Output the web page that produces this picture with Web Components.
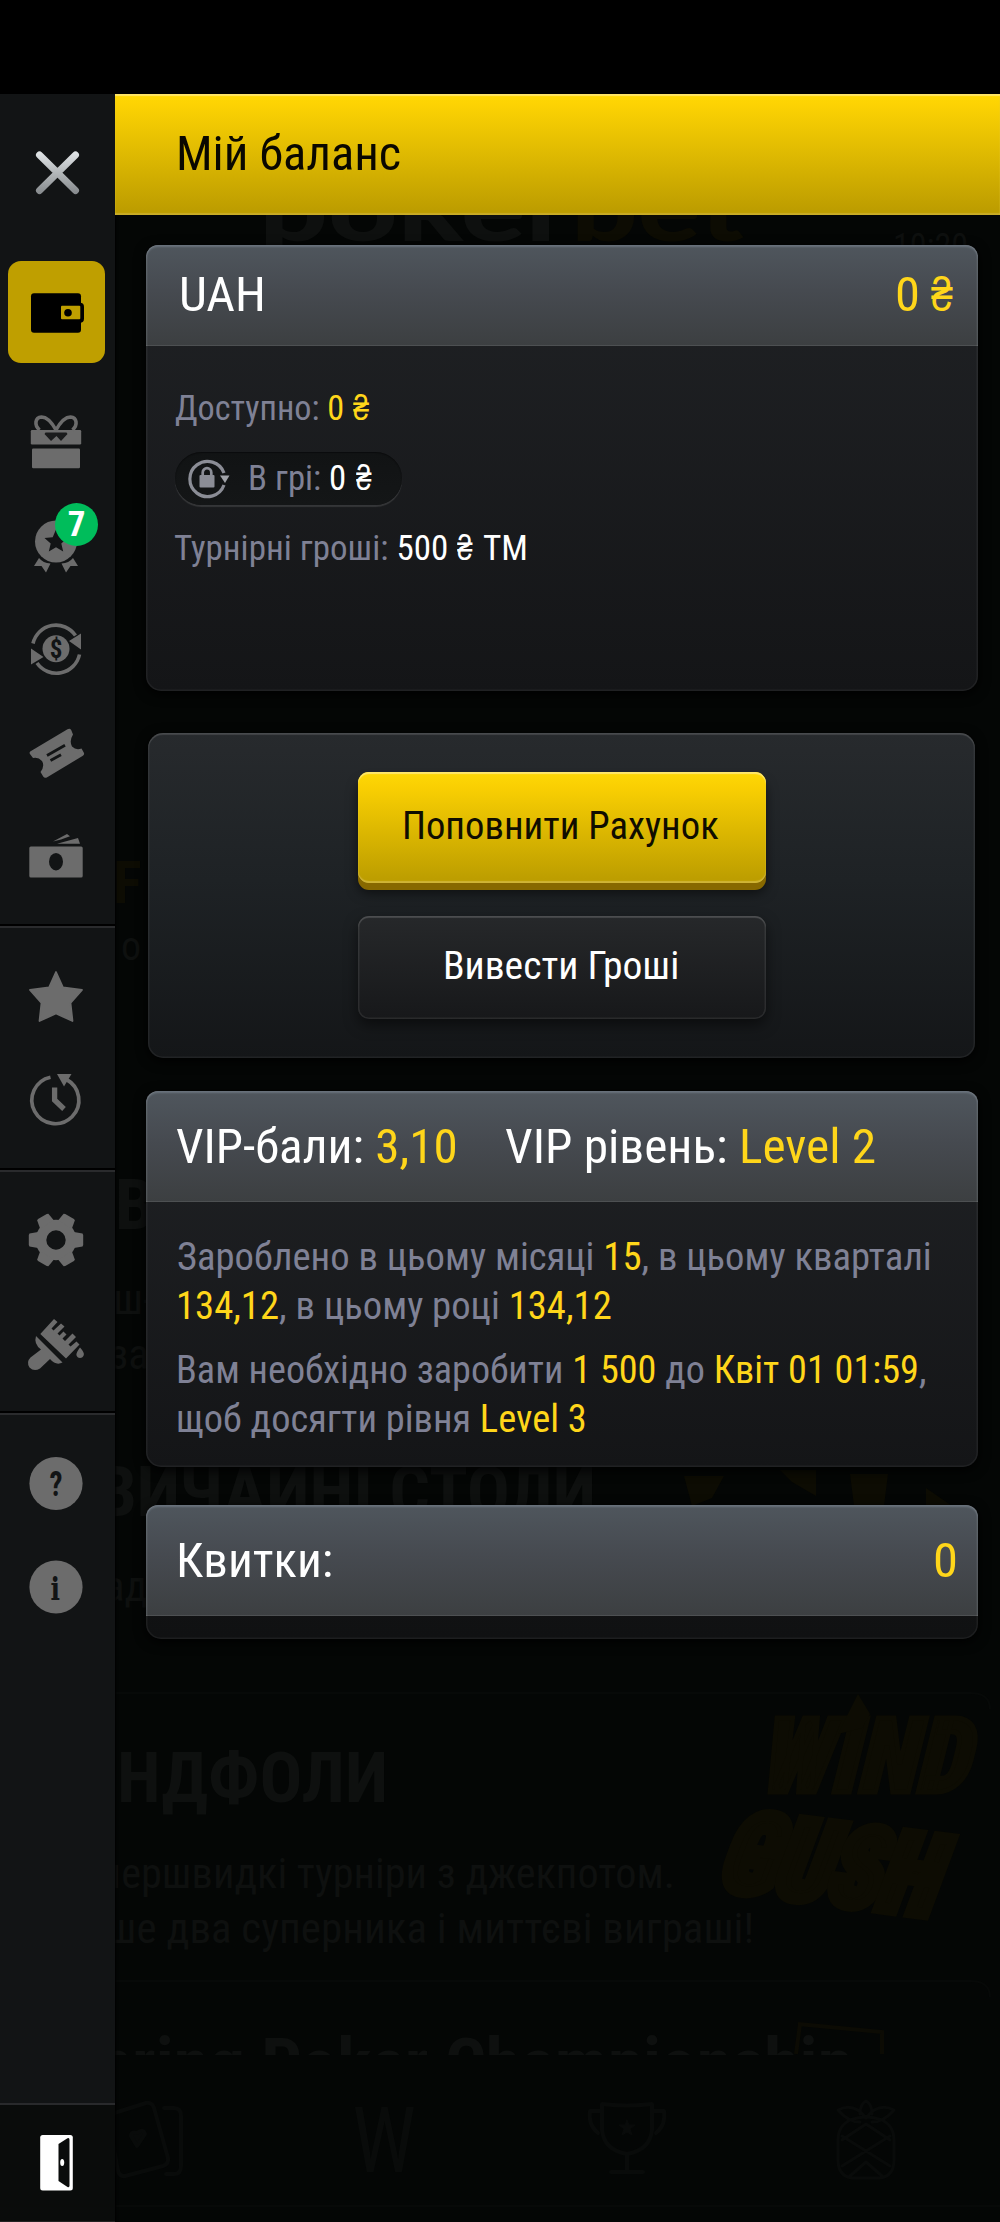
<!DOCTYPE html>
<html lang="uk">
<head>
<meta charset="utf-8">
<title>Мій баланс</title>
<style>
html,body{margin:0;background:#040605}
body{font-family:"Roboto Condensed",Roboto,sans-serif;font-stretch:75%;color:#fff}
b{font-weight:400;color:#ffd61a}
i{font-style:normal;color:#fff}
.line{display:flex}
</style>
</head>
<body>
<balance-page>
  <side-rail slot="rail"></side-rail>
  <title-bar slot="main"><fit-text w="221">Мій баланс</fit-text></title-bar>
  <info-card slot="main" style="--h:446px;--head:101px;--lift:2px">
    <fit-text slot="head" w="81" style="margin-left:36.5px">UAH</fit-text>
    <div slot="head" class="line" style="gap:14.5px;margin-right:24.5px"><fit-text w="20"><b>0</b></fit-text><fit-text w="22"><b>₴</b></fit-text></div>
    <div style="display:flex;flex-direction:column;gap:17px;padding:36px 0 0 29px;font-size:35px;line-height:53px">
      <div class="line" style="gap:10.5px"><fit-text w="168">Доступно: <b>0</b></fit-text><fit-text w="16.5"><b>₴</b></fit-text></div>
      <lock-pill><fit-text w="95">В грі: <i>0</i></fit-text><fit-text w="16" style="margin-left:11px"><i>₴</i></fit-text></lock-pill>
      <div class="line" style="gap:10.5px"><fit-text w="272">Турнірні гроші: <i>500</i></fit-text><fit-text w="16"><i>₴</i></fit-text><fit-text w="41.5"><i>ТМ</i></fit-text></div>
    </div>
  </info-card>
  <action-card slot="main">
    <push-button kind="gold"><fit-text w="313.5">Поповнити Рахунок</fit-text></push-button>
    <push-button kind="dark"><fit-text w="232.5">Вивести Гроші</fit-text></push-button>
  </action-card>
  <info-card slot="main" style="--h:376px;--head:111px;margin-top:33px">
    <div slot="head" class="line" style="gap:51px;margin-left:31.5px">
      <fit-text w="278">VIP-бали: <b>3,10</b></fit-text>
      <fit-text w="368.5">VIP рівень: <b>Level 2</b></fit-text>
    </div>
    <div style="display:flex;flex-direction:column;padding:31px 0 0 32px;font-size:38px;line-height:49px">
      <fit-text w="752">Зароблено в цьому місяці <b>15</b>, в цьому кварталі</fit-text>
      <fit-text w="433"><b>134,12</b>, в цьому році <b>134,12</b></fit-text>
      <fit-text w="747" style="margin-top:15px">Вам необхідно заробити <b>1 500</b> до <b>Квіт 01 01:59</b>,</fit-text>
      <fit-text w="407">щоб досягти рівня <b>Level 3</b></fit-text>
    </div>
  </info-card>
  <info-card slot="main" style="--h:134px;--head:111px;--body1:#121415;--body2:#101112;margin-top:38px">
    <fit-text slot="head" w="152" style="margin-left:33.5px">Квитки:</fit-text>
    <fit-text slot="head" w="20" style="margin-right:23px"><b>0</b></fit-text>
  </info-card>
</balance-page>

<script>
const define=(name,html,ready)=>{
  const t=document.createElement('template');t.innerHTML=html;
  customElements.define(name,class extends HTMLElement{
    constructor(){super();this.attachShadow({mode:'open'}).append(t.content.cloneNode(true));}
    connectedCallback(){if(ready)ready(this,this.shadowRoot);}
  });
};

define('lobby-backdrop',`<style>
:host{display:block;position:absolute;inset:0;z-index:-1;overflow:hidden;pointer-events:none}
svg{display:block}
text{font-family:"Roboto Condensed",Roboto,sans-serif;fill:#0e100f}
.t{font-weight:700;font-size:70px}.p{font-size:43px}
.y{fill:#0d0c03}
.ln{stroke:#070908;fill:none;stroke-width:2}
.ic{stroke:#090b0a;fill:none;stroke-width:4;stroke-linejoin:round;stroke-linecap:round}
</style>
<svg width="1000" height="2222" viewBox="0 0 1000 2222">
<rect width="1000" height="94" fill="#000"/>
<text x="259" y="241" style="font:900 92px Lato,sans-serif" textLength="312" lengthAdjust="spacingAndGlyphs">poker</text>
<text x="571" y="241" class="y" style="font:900 92px Lato,sans-serif" textLength="173" lengthAdjust="spacingAndGlyphs">bet</text>
<text x="893" y="258" style="font-size:35px" textLength="75" lengthAdjust="spacingAndGlyphs">10:20</text>
<text x="113" y="903" class="y" style="font-weight:700;font-size:60px">F</text>
<text x="121" y="960" style="font-size:40px">о</text>
<text x="115" y="1229" class="t">В</text>
<text x="113" y="1314" class="p">ш-</text>
<text x="109" y="1369" class="p">за</text>
<text x="104" y="1601" class="p">ад</text>
<text x="58" y="1516" class="t" textLength="538" lengthAdjust="spacingAndGlyphs">ЗВИЧАЙНІ СТОЛИ</text>
<path class="y" d="M684 1476h40l-12 22-20 8zM780 1470h36v26l-24-14zM850 1474h38l-4 32h-30zM926 1488l26 18h-26z"/>
<path class="ln" d="M0 1693H970q20 0 20 16M0 1981H970q20 0 20 16M0 2206H1000"/>
<text x="58" y="1802" class="t" textLength="330" lengthAdjust="spacingAndGlyphs">ВІНДФОЛИ</text>
<text x="58" y="1888" class="p" textLength="617" lengthAdjust="spacingAndGlyphs">Супершвидкі турніри з джекпотом.</text>
<text x="58" y="1943" class="p" textLength="696" lengthAdjust="spacingAndGlyphs">Лише два суперника і миттєві виграші!</text>
<g transform="translate(17 3) skewX(-14)">
<text x="1186" y="1789" class="y" style="font-weight:900;font-size:104px;stroke:#0d0c03;stroke-width:5" textLength="210" lengthAdjust="spacingAndGlyphs">WIND</text>
<text x="1168" y="1770" transform="rotate(7 1180 1890) translate(0 116)" class="y" style="font-weight:900;font-size:106px;stroke:#0d0c03;stroke-width:12" textLength="222" lengthAdjust="spacingAndGlyphs">GUSH</text>
</g>
<path class="y" d="M858 1694l12 20-8 14-24 6z"/>
<clipPath id="c"><rect y="2000" width="1000" height="55"/></clipPath>
<g clip-path="url(#c)"><text x="58" y="2088" class="t" textLength="795" lengthAdjust="spacingAndGlyphs">Spring Poker Championship</text>
<path d="M798 2024l84 8v22M800 2024l-4 30" fill="none" stroke="#0c0b04" stroke-width="4"/></g>
<g class="ic"><path d="M108 2115l38-12q6-1 8 5l14 50q1 6-5 8l-38 10q-5 1-7-5zM164 2108h10q7 0 7 8v50q0 8-7 8h-8"/>
<path d="M137 2146l-6-10q0-5 6-3 6-5 8 1z" fill="#090b0a"/>
<path d="M602 2104q25 3 50 0v26q-2 20-25 24-23-4-25-24zM600 2111h-10q-2 14 8 22M654 2111h10q2 14-8 22M627 2155v15M611 2172h32"/>
<path d="M627 2120l2 5h6l-5 4 2 6-5-3-5 3 2-6-5-4h6z" fill="#090b0a" stroke-width="1"/>
<path d="M850 2120q16-6 32 0 12 6 12 20v20q0 16-14 18h-28q-14-2-14-18v-20q0-14 12-20zM866 2118q-12-16-28-8 10 12 22 12M866 2118q12-16 28-8-10 12-22 12M860 2114q0-10 6-13 6 3 6 13M842 2140l24-16 24 16M842 2166l48-30M842 2136l48 30M850 2176l16-14 16 14" stroke-width="3"/></g>
<text x="352" y="2172" style="font-size:90px;fill:#090b0a" textLength="64" lengthAdjust="spacingAndGlyphs">W</text>
</svg>`);

define('balance-page',`<style>
:host{display:flex;position:relative;width:1000px;height:2222px;box-sizing:border-box;padding-top:94px;z-index:0;overflow:hidden}
main{flex:1;display:flex;flex-direction:column}
</style><lobby-backdrop></lobby-backdrop><slot name="rail"></slot><main><slot name="main"></slot></main>`);

define('title-bar',`<style>
:host{display:flex;align-items:center;flex:none;height:121px;margin-bottom:30px;padding:0 0 1px 64px;box-sizing:border-box;
font-size:48px;line-height:60px;color:#0a0800;background:linear-gradient(#ffd704,#fdd303 8%,#bd9d00 96%);
box-shadow:inset 0 2px 1px #ffe566,inset 0 -2px 1px #c9ac26}
</style><slot></slot>`);

define('info-card',`<style>
:host{display:flex;flex-direction:column;flex:none;height:var(--h);width:832px;margin-left:30.5px;border-radius:12px 12px 15px 15px;color:#7f8195;
background:linear-gradient(var(--body1,#202225),var(--body2,#141517));box-shadow:inset 0 0 0 1.5px rgba(255,255,255,.055),0 3px 12px #000}
header{display:flex;align-items:center;justify-content:space-between;flex:none;box-sizing:border-box;height:var(--head);padding-bottom:var(--lift,0);
font-size:48px;line-height:60px;color:#fff;border-radius:12px 12px 0 0;
background:linear-gradient(#4f565d,#464a50 45%,#3c3f41);box-shadow:inset 0 2px 2px rgba(190,205,220,.24),inset 0 -1px 0 rgba(255,255,255,.09),inset 1.5px 0 0 rgba(255,255,255,.07),inset -1.5px 0 0 rgba(255,255,255,.07)}
</style><header><slot name="head"></slot></header><slot></slot>`);

define('lock-pill',`<style>
:host{display:flex;align-items:center;width:227px;height:53px;border-radius:27px;color:#7f8195;
background:linear-gradient(#111314,#141617);box-shadow:0 2px 1px rgba(255,255,255,.12),inset 0 1px 1px #0b0c0d}
svg{flex:none;display:block}
</style><svg width="75" height="53" viewBox="175 452 75 53">
<path d="M224 473A17.6 17.6 0 1 0 224 485" fill="none" stroke="#8b8d96" stroke-width="3.2"/>
<path d="M220 475.500h9.500l-4.500 7.500z" fill="#a0a2a8"/><rect x="199.500" y="475" width="15" height="12.500" rx="1" fill="#8b8d96"/>
<path d="M202.700 476v-3.500a4.300 4.300 0 0 1 8.600 0v3.500" fill="none" stroke="#8b8d96" stroke-width="2.700"/></svg><slot></slot>`);

define('action-card',`<style>
:host{display:flex;flex-direction:column;align-items:center;gap:26px;flex:none;box-sizing:border-box;width:827px;height:325px;margin:42px 0 0 33px;padding-top:39px;
border-radius:15px;background:linear-gradient(#272a2d,#1e2225 45%,#141618);box-shadow:inset 0 2px 1px rgba(255,255,255,.1),inset 0 0 0 1.5px rgba(255,255,255,.06),0 3px 12px #000}
</style><slot></slot>`);

define('push-button',`<style>
:host{display:flex;align-items:center;justify-content:center;box-sizing:border-box;width:408px;border-radius:11px;font-size:38px;line-height:50px}
:host([kind=gold]){height:111px;margin-bottom:7px;padding-bottom:4px;color:#100d00;background:linear-gradient(#ffd806,#f9cf02 14%,#bd9e00 96%);
box-shadow:inset 0 2px 1px #ffe76c,inset 0 -2px 1px #d0b436,0 7px 0 #876800,0 10px 12px rgba(0,0,0,.55)}
:host([kind=dark]){height:103px;padding-bottom:4px;color:#fff;background:linear-gradient(#26282a,#17181a);
box-shadow:inset 0 2px 1px rgba(255,255,255,.11),inset 0 0 0 1.500px rgba(255,255,255,.08),0 6px 14px rgba(0,0,0,.5)}
</style><slot></slot>`);

/* Every glyph is drawn in rail coordinates; "top" is where its slot begins. */
const glyphs={
close:`<defs><linearGradient id="g" gradientUnits="userSpaceOnUse" x1="0" y1="151" x2="0" y2="194"><stop stop-color="#e3e7e9"/><stop offset="1" stop-color="#85898c"/></linearGradient></defs><path d="M39.500 155L75.500 190.500M75.500 155L39.500 190.500" stroke="url(#g)" stroke-width="7" stroke-linecap="round"/>`,
wallet:`<rect x="31" y="293.300" width="50" height="39.400" rx="3" fill="#000"/><rect x="58" y="302.700" width="26" height="20" rx="4" fill="#000"/><rect x="61" y="305.700" width="19.300" height="13.600" rx="1" fill="#bf9f00"/><circle cx="68" cy="312.700" r="3.800" fill="#000"/>`,
gift:`<rect x="32" y="448.500" width="48" height="19.700" rx="1.200"/><rect x="30.800" y="430" width="50.400" height="14.500" rx="1.200"/><path d="M56 430C51 421 46 417 41.500 417 35 417.500 34 425 39.500 430M56 430C61 421 66 417 70.500 417 77 417.500 78 425 72.500 430" fill="none" stroke="#6c6c6c" stroke-width="3.600"/><path d="M45.500 432.500H66.500L67.500 434 61 441 56.500 436 51 441 44.500 434z" fill="#1a1b1c"/>`,
medal:`<circle cx="56" cy="541.500" r="21"/><path d="M56 529.500l3.300 7.700 8.200.7-6.200 5.500 1.900 8.100-7.200-4.300-7.200 4.300 1.900-8.100-6.200-5.500 8.200-.7z" fill="#121415"/><path d="M39 558q4 5 11.500 5.500L46 572.500 41.500 566H34zM73 558q-4 5-11.500 5.500L66 572.500 70.500 566H78z"/>`,
swap:`<circle cx="56" cy="648.800" r="13.500"/><text x="56" y="657.500" text-anchor="middle" font-size="25" font-weight="700" fill="#121415">$</text><path d="M33 643.500A23.600 23.600 0 0 1 75.500 635.500M79.500 654.500A23.600 23.600 0 0 1 37 663" fill="none" stroke="#6c6c6c" stroke-width="3.600"/><path d="M81 633.500V649.500L69 641zM31 648.500V664.500L43.500 657z"/>`,
ticket:`<path d="M31 751L67.500 729.300Q70 728 71.300 730.200L73 734.500Q69 741 72 746.500 76 750.500 81.500 748.500L84 753Q84.500 755 82.500 756L46.800 777.500Q44.500 778.500 43.200 776.500L40.500 772Q45 766 42 761 38 756.500 33 758L29.800 753.800Q29 752 31 751Z"/><path d="M47 755.500L65 745.300M50.500 760.500L61 754.800" stroke="#121415" stroke-width="2.800"/>`,
cash:`<rect x="29.300" y="846.500" width="53.400" height="31" rx="1.500"/><ellipse cx="56" cy="861.700" rx="7" ry="8.700" fill="#121415"/><path d="M53 841.500L67 834 70 836.300 61 839.500zM57 843.800L78 838 80 843.800z"/>`,
star:`<path d="M56 972L63 987.500 82 990 70.500 1003 72.500 1021 56 1013.500 39.500 1021 41.500 1003 30 990 49 987.500z" stroke="#6c6c6c" stroke-width="1.800" stroke-linejoin="round"/>`,
history:`<path d="M50.500 1077.200A23.500 23.500 0 1 0 66.500 1079.500" fill="none" stroke="#6c6c6c" stroke-width="3.700"/><path d="M57 1074H71.500L64 1086.500z"/><path d="M54.600 1087.500V1100L64 1109" fill="none" stroke="#6c6c6c" stroke-width="5.300"/>`,
gear:`<circle cx="56" cy="1240" r="15" fill="none" stroke="#6c6c6c" stroke-width="10.600"/>`+[30,90,150,210,270,330].map(a=>`<path d="M48 1222L49.500 1213.500 51 1212.800H61L62.500 1213.500 64 1222z" transform="rotate(${a} 56 1240)"/>`).join(''),
brush:`<path d="M40.300 1334L54 1319 57.500 1322 51.500 1328.500 53.500 1330.500 61 1323.500 64.500 1326.500 57.500 1333.500 59.500 1335.500 63.500 1331.500 66.500 1334.500 62.500 1338.500 65 1341 72.500 1333.500 76 1337 68.500 1344.500 70.500 1346.500 76.500 1341.500 79.500 1344.500 66 1358.500z"/><path d="M36 1336L62.500 1362.500Q56 1366 50 1359L40 1368.500Q34 1372 29.500 1367.500 26 1362 30.500 1357.500L41 1349.500Q33.500 1344 36 1336Z"/><path d="M80 1347.500q4.500 5 3.800 7.500-1 3-3.800 3t-3.600-3q-.2-2.500 3.600-7.500z"/>`,
help:`<circle cx="56" cy="1483.500" r="26.600"/><text x="56" y="1496" text-anchor="middle" font-size="35" font-weight="700" fill="#121415" textLength="13" lengthAdjust="spacingAndGlyphs">?</text>`,
info:`<circle cx="56" cy="1587" r="26.600"/><text x="50.500" y="1599.500" style="font-family:'DejaVu Serif';font-size:31px;font-weight:700" fill="#121415" textLength="9.500" lengthAdjust="spacingAndGlyphs">i</text>`,
door:`<rect x="40.200" y="2135" width="32.600" height="55.500" rx="2.500" fill="#fff"/><path d="M58.500 2144L67.500 2138.300Q69.500 2137.500 69.500 2140V2185.500Q69.500 2188 67.500 2187L58.500 2181z" fill="#0a0c0b"/><ellipse cx="62.200" cy="2162.500" rx="2" ry="3.600" fill="#fff"/>`
};
customElements.define('rail-icon',class extends HTMLElement{
  constructor(){super();this.attachShadow({mode:'open'});}
  connectedCallback(){
    const h=+this.getAttribute('h')||104;
    this.shadowRoot.innerHTML=`<style>:host{display:block;position:relative;height:${h}px}svg{display:block;fill:#6c6c6c}text{font-family:"Roboto Condensed",Roboto,sans-serif}
    ::slotted(*){position:absolute;left:55px;top:10px}</style>
    <svg width="115" height="${h}" viewBox="0 ${this.getAttribute('top')} 115 ${h}">${glyphs[this.getAttribute('name')]}</svg><slot></slot>`;
  }
});

define('count-badge',`<style>
:host{display:flex;align-items:center;justify-content:center;width:43px;height:43px;border-radius:50%;background:#00bd5b;color:#fff;font-size:35px;line-height:43px;font-weight:700}
</style><slot></slot>`);

define('side-rail',`<style>
:host{display:flex;flex-direction:column;flex:none;width:115px;background:#121415;box-shadow:1px 0 2px #000}
.tile{margin:10px 0 26px 8px;width:97px;height:102px;border-radius:13px;background:#bf9f00}
.tile rail-icon{margin-left:-8px}
nav{padding:0 0 15px}
nav+nav{padding-top:16.500px;border-top:2.500px solid #2a2b2d;box-shadow:0 -2px 0 #000;margin-top:2px}
footer{margin-top:auto;box-sizing:border-box;height:119px;background:#0a0c0b;border-top:2px solid #292a2c;border-bottom:1px solid #222}
</style>
<rail-icon name="close" top="94" h="157"></rail-icon>
<div class="tile"><rail-icon name="wallet" top="261" h="102"></rail-icon></div>
<nav><rail-icon name="gift" top="389"></rail-icon><rail-icon name="medal" top="493"><count-badge>7</count-badge></rail-icon><rail-icon name="swap" top="597"></rail-icon><rail-icon name="ticket" top="701"></rail-icon><rail-icon name="cash" top="805"></rail-icon></nav>
<nav><rail-icon name="star" top="945"></rail-icon><rail-icon name="history" top="1049"></rail-icon></nav>
<nav><rail-icon name="gear" top="1188"></rail-icon><rail-icon name="brush" top="1292"></rail-icon></nav>
<nav><rail-icon name="help" top="1432"></rail-icon><rail-icon name="info" top="1536"></rail-icon></nav>
<footer><rail-icon name="door" top="2105" h="114"></rail-icon></footer>`);

/* Condensed run of text whose inked width is set by the "w" attribute.
   Registered last, so that the font size given by its container already applies. */
const ctx=document.createElement('canvas').getContext('2d');
define('fit-text',`<style>
:host{display:block;flex:none;white-space:nowrap;text-align:left}
span{display:inline-block;transform-origin:0 0}
</style><span><slot></slot></span>`,(el,root)=>{
  const w=+el.getAttribute('w'),s=root.querySelector('span'),cs=getComputedStyle(el);
  el.style.width=w+'px';
  ctx.font=cs.fontWeight+' '+cs.fontSize+' '+cs.fontFamily;
  if('fontStretch' in ctx)ctx.fontStretch='condensed';
  const m=ctx.measureText(el.textContent),k0=s.getBoundingClientRect().width/m.width;
  const l=-m.actualBoundingBoxLeft*k0,r=m.actualBoundingBoxRight*k0,k=w/(r-l);
  s.style.transform='translateX('+(-l*k)+'px) scaleX('+k+')';
});
</script>
</body>
</html>
